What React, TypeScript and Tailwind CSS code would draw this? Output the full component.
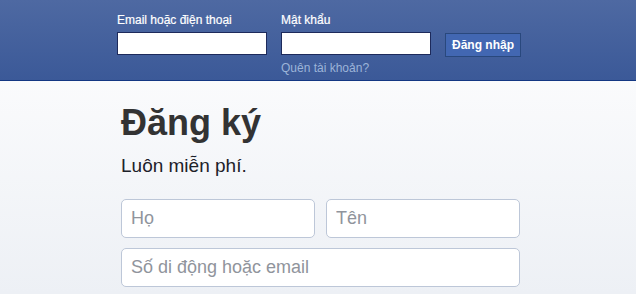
const font = { fontFamily: '"Liberation Sans", Arial, sans-serif' }

function HeaderField({ label, type }: { label: string; type: string }) {
    return (
        <div className="flex flex-col">
            <label className="text-[12px] leading-[15px] text-white mb-[4px] [-webkit-text-stroke:0.2px_white]">{label}</label>
            <input
                type={type}
                className="w-[150px] h-[23px] bg-white border border-[#1d2a5b] outline-none px-1 text-[12px]"
            />
        </div>
    )
}

function Field({ placeholder, className }: { placeholder: string; className?: string }) {
    return (
        <input
            placeholder={placeholder}
            className={"h-[39px] bg-white border border-[#bdc7d8] rounded-[5px] pl-[9px] pr-[10px] text-[18px] text-[#1d2129] placeholder:text-[#90949c] outline-none " + (className ?? "")}
        />
    )
}

export default function App() {
    return (
        <div style={font} className="w-[636px] h-[294px] overflow-hidden bg-gradient-to-b from-white to-[#edf0f5]">
            <div className="h-[81px] bg-gradient-to-b from-[#4e69a2] to-[#3b5998] border-b border-[#133783]">
                <div className="w-[402px] mx-auto pt-[13px] flex">
                    <div className="mr-[14px]">
                        <HeaderField label="Email hoặc điện thoại" type="text" />
                    </div>
                    <div className="flex flex-col mr-[14px]">
                        <HeaderField label="Mật khẩu" type="password" />
                        <a className="text-[12px] leading-[15px] text-[#9cb4d8] mt-[6px]">Quên tài khoản?</a>
                    </div>
                    <div className="pt-[19px]">
                        <button className="h-[24px] w-[76px] whitespace-nowrap bg-[#4267b2] border border-[#29487d] text-white text-[12px] font-bold leading-none">
                            Đăng nhập
                        </button>
                    </div>
                </div>
            </div>
            <div className="w-[402px] mx-auto pl-[4px] pt-[20px]">
                <h1 className="text-[36px] font-bold text-[#333] leading-[44px]">Đăng ký</h1>
                <p className="text-[19px] text-[#1d2129] leading-[24px] mt-[9px]">Luôn miễn phí.</p>
                <div className="mt-[21px] w-[399px] flex flex-col gap-[10px]">
                    <div className="flex gap-[11px]">
                        <Field placeholder="Họ" className="w-[194px]" />
                        <Field placeholder="Tên" className="w-[194px]" />
                    </div>
                    <Field placeholder="Số di động hoặc email" className="w-[399px]" />
                </div>
            </div>
        </div>
    )
}
